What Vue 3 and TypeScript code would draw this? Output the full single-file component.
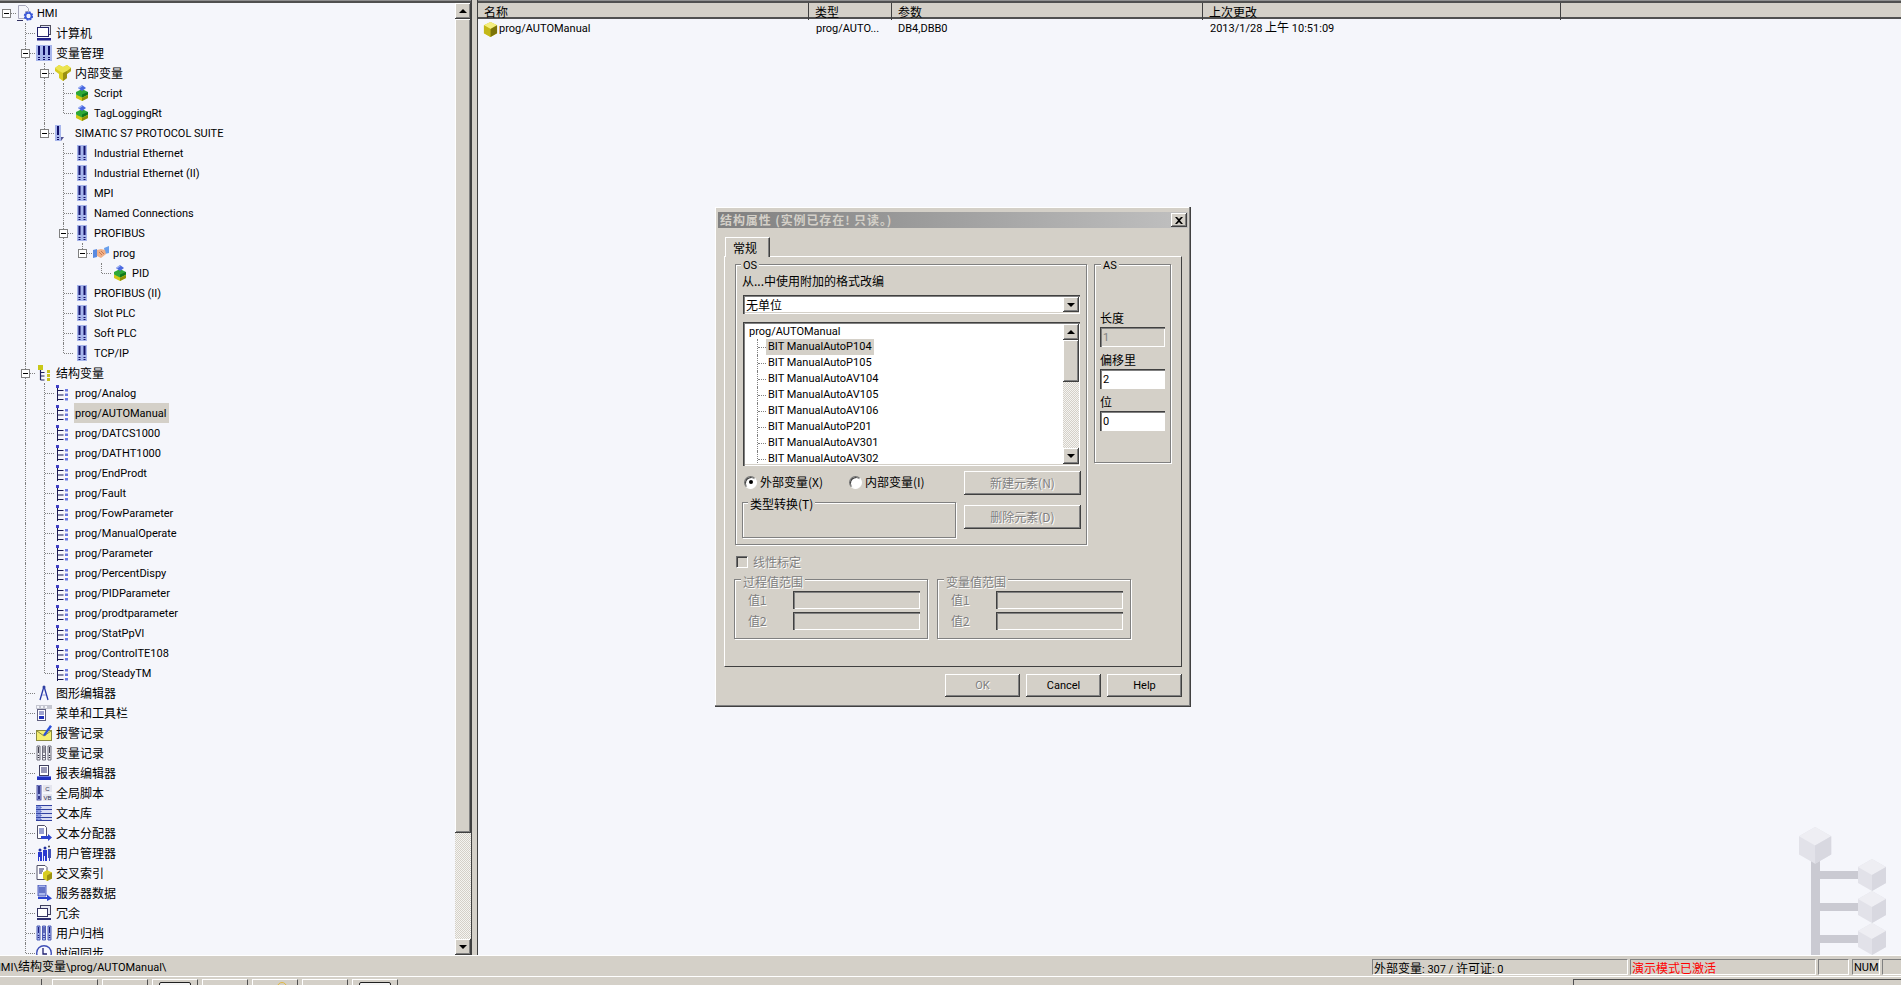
<script setup lang="ts">
type TreeNode = { label: string; icon: string; cjk?: boolean; children?: TreeNode[]; selected?: boolean }
type Row = TreeNode & { level: number; guides: boolean[]; hasNext: boolean; isRoot: boolean }

const leaf = (label: string, icon: string, cjk = false): TreeNode => ({ label, icon, cjk })
const channels = (names: string[]) => names.map((name) => leaf(name, 'channel'))

const structs = [
  'prog/Analog', 'prog/AUTOManual', 'prog/DATCS1000', 'prog/DATHT1000', 'prog/EndProdt', 'prog/Fault',
  'prog/FowParameter', 'prog/ManualOperate', 'prog/Parameter', 'prog/PercentDispy', 'prog/PIDParameter',
  'prog/prodtparameter', 'prog/StatPpVl', 'prog/ControlTE108', 'prog/SteadyTM',
].map((name) => ({ ...leaf(name, 'struct'), selected: name === 'prog/AUTOManual' }))

const tree: TreeNode = {
  label: 'HMI',
  icon: 'hmi',
  children: [
    leaf('计算机', 'pc', true),
    {
      label: '变量管理',
      icon: 'tags',
      cjk: true,
      children: [
        { label: '内部变量', icon: 'cubes', cjk: true, children: [leaf('Script', 'stack'), leaf('TagLoggingRt', 'stack')] },
        {
          label: 'SIMATIC S7 PROTOCOL SUITE',
          icon: 'driver',
          children: [
            ...channels(['Industrial Ethernet', 'Industrial Ethernet (II)', 'MPI', 'Named Connections']),
            {
              label: 'PROFIBUS',
              icon: 'channel',
              children: [{ label: 'prog', icon: 'hands', children: [leaf('PID', 'stack')] }],
            },
            ...channels(['PROFIBUS (II)', 'Slot PLC', 'Soft PLC', 'TCP/IP']),
          ],
        },
      ],
    },
    { label: '结构变量', icon: 'structroot', cjk: true, children: structs },
    leaf('图形编辑器', 'draw', true),
    leaf('菜单和工具栏', 'menu', true),
    leaf('报警记录', 'alarm', true),
    leaf('变量记录', 'log', true),
    leaf('报表编辑器', 'report', true),
    leaf('全局脚本', 'script', true),
    leaf('文本库', 'textlib', true),
    leaf('文本分配器', 'textdist', true),
    leaf('用户管理器', 'user', true),
    leaf('交叉索引', 'crossref', true),
    leaf('服务器数据', 'server', true),
    leaf('冗余', 'redundancy', true),
    leaf('用户归档', 'archive', true),
    leaf('时间同步', 'time', true),
  ],
}

function flatten(node: TreeNode, level: number, guides: boolean[], hasNext: boolean, isRoot: boolean): Row[] {
  const rows: Row[] = [{ ...node, level, guides, hasNext, isRoot }]
  const kids = node.children ?? []
  kids.forEach((kid, index) => {
    const childGuides = isRoot ? [false] : [...guides, hasNext]
    rows.push(...flatten(kid, level + 1, childGuides, index < kids.length - 1, false))
  })
  return rows
}

const rows = flatten(tree, 0, [], false, true)

const members = ['P104', 'P105', 'AV104', 'AV105', 'AV106', 'P201', 'AV301', 'AV302', 'AV303'].map((n) => `BIT ManualAuto${n}`)
const taskCells = [0, 1, 2, 3, 4, 5, 6]
const markCubes = [
  { x: 0, y: 0, s: 1.15 },
  { x: 59, y: 32, s: 1 },
  { x: 59, y: 64, s: 1 },
  { x: 59, y: 96, s: 1 },
]
</script>

<template>
  <div class="page">
    <svg class="defs" aria-hidden="true">
      <symbol id="i-hmi" viewBox="0 0 16 16">
        <path d="M1.500 .5h7l3 3v3h-3v7h-7z" fill="#f4f5fb" stroke="#a8a8bc" />
        <path d="M0 15.500h6" stroke="#303060" />
        <circle cx="11.500" cy="11" r="3.600" fill="none" stroke="#3a58d8" stroke-width="2.200" stroke-dasharray="1.800 1" />
        <circle cx="11.500" cy="11" r="3" fill="none" stroke="#3a58d8" stroke-width="1.600" />
        <circle cx="11.500" cy="11" r="1" fill="#e8ecff" />
      </symbol>
      <symbol id="i-pc" viewBox="0 0 16 16">
        <rect x="4.500" y=".5" width="10" height="9" fill="#dfe2f2" stroke="#505060" />
        <rect x="1.500" y="2.500" width="11" height="9" fill="#fff" stroke="#20206a" />
        <rect x="1" y="13" width="14" height="2.500" fill="#20208a" />
      </symbol>
      <symbol id="i-tags" viewBox="0 0 16 16">
        <rect x="0" y="0" width="16" height="16" fill="#a8b6ec" />
        <path d="M3 1v9M8 1v9M13 1v9" stroke="#10106a" stroke-width="2" />
        <path d="M3 12v3M8 12v3M13 12v3" stroke="#10106a" stroke-width="2" stroke-dasharray="1 1" />
      </symbol>
      <symbol id="i-cubes" viewBox="0 0 16 16">
        <path d="M0 3l4-3 4 2 4-2 4 3v3l-4 3v4l-4 3-4-3V9L0 6z" fill="#d8cc20" />
        <path d="M0 3l4-3 4 2 4-2 4 3-4 3-4 2-4-2z" fill="#ece450" />
        <path d="M8 8v8l4-3V6z" fill="#9a9010" />
        <path d="M12 6l4-3v3l-4 3z" fill="#aea418" />
      </symbol>
      <symbol id="i-stack" viewBox="0 0 16 16">
        <path d="M2 10l6-3 6 3v3l-6 3-6-3z" fill="#cfc818" />
        <path d="M8 13v3l6-3v-3z" fill="#8e9008" />
        <path d="M2 7l6-3 6 3v2.500l-6 3-6-3z" fill="#2ea838" />
        <path d="M8 9.500v3l6-3V7z" fill="#10781c" />
        <path d="M4 3l4-3 4 3-4 3z" fill="#4a68e0" />
        <path d="M4 3l4-3 1 .8-4 3z" fill="#a0b4f4" />
      </symbol>
      <symbol id="i-driver" viewBox="0 0 16 16">
        <rect x="0" y="0" width="6" height="16" fill="#a8b6ec" />
        <path d="M3 1v9" stroke="#10106a" stroke-width="2" />
        <path d="M3 12v3" stroke="#10106a" stroke-width="2" stroke-dasharray="1 1" />
        <path d="M6 12h3l-3 4z" fill="#505090" />
      </symbol>
      <symbol id="i-channel" viewBox="0 0 16 16">
        <rect x="3" y="0" width="10" height="16" fill="#a8b6ec" />
        <path d="M5.500 1v9M10.500 1v9" stroke="#10106a" stroke-width="2" />
        <path d="M5.500 12v3M10.500 12v3" stroke="#10106a" stroke-width="2" stroke-dasharray="1 1" />
      </symbol>
      <symbol id="i-hands" viewBox="0 0 16 16">
        <path d="M0 5l4-1v8l-4 1z" fill="#5a8ae0" />
        <path d="M11 3l5-2v7l-4 1z" fill="#6aa0ec" />
        <path d="M4 5l4-1 4 1 1 4-5 4-4-2z" fill="#f0b088" />
        <path d="M6 7l3 3M8 6l3 3" stroke="#c87850" />
      </symbol>
      <symbol id="i-structroot" viewBox="0 0 16 16">
        <rect x="2" y="0" width="5" height="5" fill="#c8c818" />
        <path d="M4.500 5v10M4.500 7.500h4M4.500 11h4M4.500 15h4" stroke="#202060" stroke-width="1.200" />
        <path d="M11 5h3v3h-3zM11 9h3v3h-3zM11 13h3v3h-3z" fill="#c8c020" />
      </symbol>
      <symbol id="i-struct" viewBox="0 0 16 16">
        <rect x="1" y="0" width="3" height="3" fill="#4040c8" />
        <path d="M2.500 3v13M2.500 5.500h6M2.500 10h6M2.500 14.500h6" stroke="#181850" />
        <path d="M10 4h3v2.500h-3zM10 8.500h3V11h-3zM10 13h3v2.500h-3z" fill="#6a78e0" />
      </symbol>
      <symbol id="i-draw" viewBox="0 0 16 16">
        <circle cx="8" cy="2" r="1.500" fill="#3040a0" />
        <path d="M7.500 3L4 15M8.500 3L12 15" stroke="#2838a8" stroke-width="1.300" fill="none" />
        <path d="M6 10h4" stroke="#9098d8" />
      </symbol>
      <symbol id="i-menu" viewBox="0 0 16 16">
        <rect x="0" y="0" width="16" height="4" fill="#c4c6d0" />
        <path d="M1 1h2v2H1zM5 1h2v2H5zM9 1h2v2H9z" fill="#f4f5fb" />
        <rect x="1.500" y="4.500" width="8" height="11" fill="#fff" stroke="#606080" />
        <path d="M3 7h5M3 9h5" stroke="#4048a0" />
        <rect x="3" y="11" width="5" height="3" fill="#2030b8" />
      </symbol>
      <symbol id="i-alarm" viewBox="0 0 16 16">
        <rect x=".5" y="5.500" width="15" height="10" fill="#f4ee70" stroke="#8a8a40" />
        <path d="M1 6l7 5 7-5" stroke="#8a8a40" fill="none" />
        <path d="M7 10l7-10 2 1.500L9 11z" fill="#2c50d8" />
      </symbol>
      <symbol id="i-log" viewBox="0 0 16 16">
        <path d="M1 1h3v14H1zM6.500 1h3v14h-3zM12 1h3v14h-3z" fill="#f0f0f4" stroke="#606070" stroke-width=".9" />
        <path d="M2.500 2v6M8 2v6M13.500 2v6" stroke="#404050" />
        <path d="M2.500 10v4M8 10v4M13.500 10v4" stroke="#303040" stroke-width="1.500" stroke-dasharray="1 1" />
      </symbol>
      <symbol id="i-report" viewBox="0 0 16 16">
        <rect x="3.500" y=".5" width="9" height="10" fill="#fff" stroke="#404060" />
        <path d="M5 3h6M5 5h6M5 7h6" stroke="#303070" />
        <path d="M1 11h14v4H1z" fill="#2030c0" />
        <path d="M1 11h14v1H1z" fill="#7080e8" />
      </symbol>
      <symbol id="i-script" viewBox="0 0 16 16">
        <rect x="1" y="0" width="4" height="15" fill="#a8b6ec" stroke="#303090" stroke-width=".8" />
        <path d="M3 1v8" stroke="#10106a" stroke-width="1.500" />
        <path d="M3 11v3" stroke="#10106a" stroke-width="1.500" />
        <rect x="7" y="0" width="9" height="7" fill="#e4e5ee" />
        <rect x="7" y="9" width="9" height="7" fill="#e4e5ee" />
        <text x="11.500" y="6" font-size="6" font-family="Liberation Sans" text-anchor="middle" fill="#303050">C</text>
        <text x="11.500" y="15" font-size="6" font-family="Liberation Sans" text-anchor="middle" fill="#303050">VB</text>
      </symbol>
      <symbol id="i-textlib" viewBox="0 0 16 16">
        <rect x="0" y="0" width="16" height="16" fill="#d8dcf4" />
        <rect x="0" y="0" width="5" height="16" fill="#8898e0" />
        <path d="M0 .5h16M0 4.500h16M0 8.500h16M0 12.500h16M0 15.500h16" stroke="#3040a0" />
        <path d="M1 0v16M5 0v16" stroke="#4050b0" stroke-dasharray="1 1" />
      </symbol>
      <symbol id="i-textdist" viewBox="0 0 16 16">
        <path d="M1.500 .5h7l2 2v11h-9z" fill="#fff" stroke="#505068" />
        <path d="M3 4h5M3 6h5M3 8h5" stroke="#3040a0" />
        <path d="M5 11h7V9l4 3.500-4 3.500v-2H5z" fill="#2c44d0" />
      </symbol>
      <symbol id="i-user" viewBox="0 0 16 16">
        <circle cx="4" cy="5" r="1.500" fill="#2030a0" />
        <circle cx="9" cy="3" r="1.500" fill="#2030a0" />
        <circle cx="13" cy="1.500" r="1" fill="#404040" />
        <path d="M2 7h4v9H4v-4H3v4H2zM7 5h4v11H9v-5H8v5H7z" fill="#2838d0" />
        <path d="M12 4h3v9h-1v3h-1v-3h-1z" fill="#4050b8" />
      </symbol>
      <symbol id="i-crossref" viewBox="0 0 16 16">
        <path d="M1 .5h8l2 2v12H1z" fill="#fff" stroke="#505068" />
        <path d="M3 4h5M3 6h4M3 8h3" stroke="#202060" />
        <path d="M11 5l5 2.500v6L11 16l-4-2.500v-6z" fill="#d8cc20" />
        <path d="M11 10.500V16l5-2.500v-6z" fill="#9c9210" />
      </symbol>
      <symbol id="i-server" viewBox="0 0 16 16">
        <path d="M2 0h8v11H2z" fill="#a8b6ec" stroke="#3040b0" stroke-width=".8" />
        <path d="M3 3h6M3 5h6M3 7h6" stroke="#2030a0" />
        <path d="M2 12h9V9.500l5 4-5 2.500v-2H2z" fill="#2c44d0" />
      </symbol>
      <symbol id="i-redundancy" viewBox="0 0 16 16">
        <rect x="4.500" y=".5" width="10" height="9" fill="#e8e9f4" stroke="#404060" />
        <rect x="1.500" y="3.500" width="10" height="8" fill="#fff" stroke="#303060" />
        <rect x="1" y="13" width="14" height="2" fill="#303070" />
      </symbol>
      <symbol id="i-archive" viewBox="0 0 16 16">
        <path d="M1 1h3v14H1zM6.500 1h3v14h-3zM12 1h3v14h-3z" fill="#a8b6ec" stroke="#4050b0" stroke-width=".9" />
        <path d="M2.500 2v6M8 2v6M13.500 2v6" stroke="#202080" />
        <path d="M2.500 10v4M8 10v4M13.500 10v4" stroke="#202080" stroke-width="1.500" stroke-dasharray="1 1" />
      </symbol>
      <symbol id="i-time" viewBox="0 0 16 16">
        <circle cx="8" cy="8" r="7.300" fill="#f8f8ff" stroke="#4050b8" stroke-width="1.400" />
        <path d="M7 3v6h4" stroke="#202070" stroke-width="1.300" fill="none" />
      </symbol>
      <symbol id="i-cube" viewBox="0 0 16 16">
        <path d="M8 0l7 3.500v8.500l-7 4-7-4V3.500z" fill="#d8cc20" />
        <path d="M8 0l7 3.500-7 4-7-4z" fill="#f4ee80" />
        <path d="M8 7.500V16l-7-4V3.500z" fill="#c4b818" />
        <path d="M8 7.500V16l7-4V3.500z" fill="#7c7408" />
      </symbol>
    </svg>

    <div class="top-edge"></div>

    <div class="work">
      <div class="tree">
        <div v-for="(row, i) in rows" :key="i" class="tree-row">
          <span v-for="(on, g) in row.guides" :key="g" class="indent" :class="{ guide: on }"></span>
          <span class="own" :class="{ root: row.isRoot, next: row.hasNext }">
            <span v-if="row.children" class="box"></span>
          </span>
          <svg class="ico"><use :href="`#i-${row.icon}`" /></svg>
          <span class="label" :class="{ cjk: row.cjk, selected: row.selected }">{{ row.label }}</span>
        </div>
      </div>

      <div class="vscroll tree-scroll">
        <div class="sbtn raised"><i class="tri up"></i></div>
        <div class="thumb raised main-thumb"></div>
        <div class="track"></div>
        <div class="sbtn raised"><i class="tri down"></i></div>
      </div>

      <div class="split"></div>

      <div class="list">
        <div class="list-head">
          <div class="col c-name cjk">名称</div>
          <div class="col c-type cjk">类型</div>
          <div class="col c-arg cjk">参数</div>
          <div class="col c-date cjk">上次更改</div>
          <div class="col c-rest"></div>
        </div>
        <div class="list-row">
          <div class="cell c-name first"><svg class="ico small"><use href="#i-cube" /></svg>prog/AUTOManual</div>
          <div class="cell c-type">prog/AUTO...</div>
          <div class="cell c-arg">DB4,DBB0</div>
          <div class="cell c-date">2013/1/28 <span class="cjk">上午</span> 10:51:09</div>
        </div>
      </div>
    </div>

    <div class="status">
      <div class="path">HMI\<span class="cjk">结构变量</span>\prog/AUTOManual\</div>
      <div class="pane p-count"><span class="cjk">外部变量</span>: 307 / <span class="cjk">许可证</span>: 0</div>
      <div class="pane p-demo cjk">演示模式已激活</div>
      <div class="pane p-empty"></div>
      <div class="pane p-num">NUM</div>
      <div class="pane p-last"></div>
    </div>

    <div class="taskbar">
      <div class="task-first"></div>
      <div v-for="n in taskCells" :key="n" class="task-cell" :class="`t${n}`"></div>
      <div class="task-box"></div>
    </div>

    <!-- watermark, sits on the empty list area -->
    <svg class="mark" width="90" height="130" viewBox="0 0 90 130">
      <path d="M12 30h9v98h-9zM21 44h38v8H21zM21 76h38v8H21zM21 108h38v8H21z" fill="#cacad2" />
      <g v-for="c in markCubes" :key="c.y" :transform="`translate(${c.x} ${c.y}) scale(${c.s})`">
        <path d="M14 0l14 8v16l-14 8-14-8V8z" fill="#e2e2e9" />
        <path d="M14 0l14 8-14 8L0 8z" fill="#eeeef3" />
        <path d="M14 16v16l14-8V8z" fill="#d8d8e0" />
      </g>
    </svg>

    <div class="dialog">
      <div class="titlebar">
        <span class="title cjk">结构属性 (实例已存在! 只读。)</span>
        <div class="close raised">
          <svg width="8" height="7" viewBox="0 0 8 7"><path d="M0 0l2 0 2 2 2-2h2L5 3.500 8 7H6L4 5 2 7H0l3-3.500z" fill="#000" /></svg>
        </div>
      </div>

      <div class="tabs">
        <div class="tab cjk">常规</div>
      </div>

      <div class="panel">
        <div class="top-groups">
          <section class="group os">
            <div class="legend os-legend">OS</div>
            <div class="cjk hint">从...中使用附加的格式改编</div>
            <div class="combo sunken">
              <span class="cjk combo-text">无单位</span>
              <div class="sbtn raised"><i class="tri down"></i></div>
            </div>
            <div class="members sunken">
              <div class="member-rows">
                <div class="member-root">prog/AUTOManual</div>
                <div v-for="(m, i) in members" :key="m" class="member">
                  <span class="member-line"></span>
                  <span class="member-text" :class="{ selected: i === 0 }">{{ m }}</span>
                </div>
              </div>
              <div class="vscroll">
                <div class="sbtn raised"><i class="tri up"></i></div>
                <div class="thumb raised small-thumb"></div>
                <div class="track"></div>
                <div class="sbtn raised"><i class="tri down"></i></div>
              </div>
            </div>
            <div class="os-bottom">
              <div class="os-left">
                <div class="radios">
                  <label class="radio r1"><i class="dot on"></i><span class="cjk">外部变量(X)</span></label>
                  <label class="radio"><i class="dot"></i><span class="cjk">内部变量(I)</span></label>
                </div>
                <section class="group convert">
                  <div class="legend convert-legend cjk">类型转换(T)</div>
                </section>
              </div>
              <div class="os-right">
                <button class="btn raised cjk wide" disabled>新建元素(N)</button>
                <button class="btn raised cjk wide" disabled>删除元素(D)</button>
              </div>
            </div>
          </section>

          <section class="group as">
            <div class="legend">AS</div>
            <div class="cjk as-label first">长度</div>
            <input class="edit off" value="1" readonly />
            <div class="cjk as-label">偏移里</div>
            <input class="edit" value="2" readonly />
            <div class="cjk as-label">位</div>
            <input class="edit" value="0" readonly />
          </section>
        </div>

        <div class="check-row">
          <i class="check"></i>
          <span class="cjk muted">线性标定</span>
        </div>

        <div class="range-groups">
          <section v-for="name in ['过程值范围', '变量值范围']" :key="name" class="group range">
            <div class="legend range-legend cjk muted">{{ name }}</div>
            <div class="range-grid">
              <span class="cjk muted">值1</span><input class="edit off" readonly />
              <span class="cjk muted">值2</span><input class="edit off" readonly />
            </div>
          </section>
        </div>
      </div>

      <div class="footer">
        <button class="btn raised" disabled>OK</button>
        <button class="btn raised">Cancel</button>
        <button class="btn raised">Help</button>
      </div>
    </div>
  </div>
</template>

<style>
html,
body {
  margin: 0;
  overflow: hidden;
  background: #f5f6fb;
}
</style>

<style scoped>
.page {
  position: relative;
  width: 1901px;
  height: 985px;
  display: flex;
  flex-direction: column;
  overflow: hidden;
  background: #f5f6fb;
  color: #000;
  font: 11px/14px Roboto, "Liberation Sans", sans-serif;
}
.defs {
  display: none;
}
.cjk {
  font-family: "Noto Sans CJK SC", "Liberation Sans", sans-serif;
  font-size: 12px;
}
.raised {
  background: #d4d0c8;
  box-shadow: inset -1px -1px #404040, inset 1px 1px #fff, inset -2px -2px #808080;
}
.sunken {
  background: #fff;
  box-shadow: inset 1px 1px #404040, inset 2px 2px #808080, inset -1px -1px #fff, inset -2px -2px #d4d0c8;
}
.top-edge {
  height: 3px;
  box-sizing: border-box;
  border-top: 1px solid #909090;
  border-bottom: 2px solid #505050;
  background: #d4d0c8;
  flex: none;
}
.work {
  flex: 1;
  min-height: 0;
  display: flex;
}

/* tree */
.tree {
  width: 455px;
  overflow: hidden;
  flex: none;
}
.tree-row {
  display: flex;
  align-items: center;
  height: 20px;
  margin-left: -3px;
}
.indent,
.own {
  position: relative;
  flex: none;
  width: 19px;
  height: 20px;
  display: flex;
  align-items: center;
  justify-content: center;
}
.indent.guide::before,
.own::before {
  content: "";
  position: absolute;
  left: 9px;
  top: 0;
  bottom: 0;
  border-left: 1px dotted #808080;
}
.own:not(.next)::before {
  bottom: 10px;
}
.own::after {
  content: "";
  position: absolute;
  left: 10px;
  right: 0;
  top: 10px;
  border-top: 1px dotted #808080;
}
.own.root::before {
  display: none;
}
.box {
  position: relative;
  z-index: 1;
  width: 9px;
  height: 9px;
  box-sizing: border-box;
  border: 1px solid #808080;
  background: linear-gradient(#000, #000) center / 5px 1px no-repeat #fff;
}
.ico {
  flex: none;
  width: 16px;
  height: 16px;
  margin-left: 1px;
}
.label {
  margin-left: 3px;
  padding: 0 3px 0 1px;
  line-height: 22px;
  height: 20px;
  white-space: nowrap;
}
.label.cjk {
  line-height: 20px;
}
.selected {
  background: #d4d0c8;
}

/* scrollbars */
.vscroll {
  width: 16px;
  flex: none;
  display: flex;
  flex-direction: column;
}
.sbtn {
  width: 16px;
  height: 16px;
  flex: none;
  display: flex;
  align-items: center;
  justify-content: center;
}
.tri {
  width: 0;
  height: 0;
  border-left: 4px solid transparent;
  border-right: 4px solid transparent;
}
.tri.up {
  border-bottom: 4px solid #000;
}
.tri.down {
  border-top: 4px solid #000;
}
.thumb {
  flex: none;
}
.main-thumb {
  height: 814px;
}
.small-thumb {
  height: 42px;
}
.track {
  flex: 1;
  min-height: 0;
  background: conic-gradient(#f5f4f1 25%, #d4d0c8 0 50%, #f5f4f1 0 75%, #d4d0c8 0) 0 0 / 2px 2px;
}
.split {
  width: 7px;
  flex: none;
  box-sizing: border-box;
  margin-top: -3px;
  background: #d4d0c8;
  border-left: 1px solid #404040;
  border-right: 1px solid #404040;
}

/* right list */
.list {
  flex: 1;
  min-width: 0;
}
.list-head {
  display: flex;
  height: 16px;
  box-sizing: border-box;
  background: #d4d0c8;
  border-bottom: 2px solid #505050;
}
.col {
  box-sizing: border-box;
  padding-left: 6px;
  border-right: 1px solid #404040;
  line-height: 17px;
  height: 17px;
  overflow: hidden;
}
.c-name { width: 331px; }
.c-type { width: 83px; }
.c-arg { width: 311px; }
.c-date { width: 358px; }
.c-rest { flex: 1; border-right: 0; }
.list-row {
  display: flex;
  height: 18px;
  margin-top: 1px;
}
.cell {
  box-sizing: border-box;
  padding-left: 7px;
  line-height: 18px;
  white-space: nowrap;
}
.cell .cjk {
  line-height: 1;
}
.cell.first {
  display: flex;
  align-items: center;
  padding-left: 5px;
}
.cell.c-arg {
  padding-left: 6px;
}
.ico.small {
  width: 15px;
  height: 15px;
  margin: 0 1px 0 0;
}

/* status */
.status {
  flex: none;
  height: 21px;
  box-sizing: border-box;
  border-top: 1px solid #fff;
  background: #d4d0c8;
  display: flex;
  align-items: center;
  padding-top: 1px;
  position: relative;
  z-index: 1;
}
.path {
  flex: 1;
  margin-left: -7px;
  white-space: nowrap;
}
.pane {
  height: 16px;
  line-height: 15px;
  box-sizing: border-box;
  padding-left: 1px;
  border: 1px solid;
  border-color: #808080 #fff #fff #808080;
  flex: none;
  white-space: nowrap;
  margin-left: 2px;
}
.p-count { width: 256px; }
.p-demo { width: 186px; color: #f00; }
.p-empty { width: 31px; margin-right: 1px; }
.p-num { width: 28px; }
.p-last { width: 21px; margin-right: -2px; }
.taskbar {
  flex: none;
  height: 9px;
  box-sizing: border-box;
  border-top: 1px solid #fff;
  background: #d4d0c8;
  display: flex;
  padding-top: 2px;
}
.task-first {
  width: 42px;
  margin-right: 10px;
  box-sizing: border-box;
  border-right: 1px solid #505050;
}
.task-cell {
  position: relative;
  flex: none;
  width: 46px;
  margin-right: 4px;
  box-sizing: border-box;
  border-left: 1px solid #fff;
  border-top: 1px solid #fff;
  border-right: 1px solid #505050;
}
.task-cell.t2::after,
.task-cell.t6::after {
  content: "";
  position: absolute;
  left: 6px;
  top: 2px;
  width: 32px;
  height: 6px;
  box-sizing: border-box;
  border: 1px solid #202020;
  border-radius: 2px 2px 0 0;
  background: #f4f4f4;
}
.task-cell.t4::after {
  content: "";
  position: absolute;
  left: 24px;
  top: 2px;
  width: 10px;
  height: 6px;
  border: 1px solid #e0b840;
  box-sizing: border-box;
  border-radius: 5px 5px 0 0;
}
.task-box {
  margin-left: auto;
  width: 328px;
  box-sizing: border-box;
  border-left: 1px solid #505050;
  border-top: 1px solid #505050;
}
.mark {
  position: absolute;
  left: 1799px;
  top: 827px;
}

/* dialog */
.dialog {
  position: absolute;
  left: 715px;
  top: 207px;
  width: 476px;
  height: 500px;
  box-sizing: border-box;
  padding: 5px 3px 0;
  background: #d4d0c8;
  box-shadow: inset -1px -1px #404040, inset -2px -2px #808080, inset 1px 1px #fff;
}
.titlebar {
  height: 16px;
  display: flex;
  align-items: center;
  justify-content: space-between;
  padding: 0 1px 0 2px;
  background: linear-gradient(90deg, #808080, #c0c0c0);
}
.title {
  color: #d4d0c8;
  font-weight: 700;
  letter-spacing: 0.9px;
  white-space: nowrap;
}
.close {
  width: 16px;
  height: 14px;
  display: flex;
  align-items: center;
  justify-content: center;
}
.tabs {
  display: flex;
  margin: 9px 6px 0;
  padding-left: 1px;
}
.tab {
  width: 45px;
  height: 20px;
  box-sizing: border-box;
  padding-left: 7px;
  line-height: 19px;
  background: #d4d0c8;
  border-top: 1px solid #fff;
  border-left: 1px solid #fff;
  border-right: 1px solid #404040;
  box-shadow: inset -1px 0 #808080;
  position: relative;
  z-index: 1;
  margin-bottom: -1px;
}
.panel {
  margin: 0 6px;
  height: 411px;
  box-sizing: border-box;
  padding: 7px 0 0 10px;
  border: 1px solid;
  border-color: #fff #404040 #404040 #fff;
}
.top-groups {
  display: flex;
  align-items: flex-start;
  gap: 7px;
}
.group {
  box-sizing: border-box;
  border: 1px solid #808080;
  box-shadow: 1px 1px #fff, inset 1px 1px #fff;
}
.legend {
  width: fit-content;
  margin: -6px 0 0 1px;
  padding: 0 2px;
  height: 14px;
  background: #d4d0c8;
  white-space: nowrap;
}
.os-legend {
  margin-left: -1px;
}
.convert-legend {
  margin-left: 5px;
}
.range-legend {
  margin: -5px 0 0 -7px;
}
.os {
  width: 352px;
  height: 281px;
  padding: 0 6px;
}
.hint {
  margin-top: 1px;
  height: 14px;
  line-height: 14px;
  white-space: nowrap;
}
.combo {
  margin: 7px 0 0 1px;
  height: 19px;
  display: flex;
  align-items: center;
  justify-content: space-between;
  padding: 0 1px 0 3px;
}
.combo .sbtn {
  height: 15px;
}
.members {
  margin: 8px 0 0 1px;
  height: 144px;
  box-sizing: border-box;
  padding: 2px 1px 2px 2px;
  display: flex;
  overflow: hidden;
}
.member-rows {
  flex: 1;
  min-width: 0;
  overflow: hidden;
}
.member-root {
  height: 15px;
  line-height: 15px;
  padding-left: 4px;
}
.member {
  display: flex;
  height: 16px;
}
.member-line {
  position: relative;
  width: 21px;
  flex: none;
}
.member-line::before {
  content: "";
  position: absolute;
  left: 12px;
  top: 0;
  bottom: 0;
  border-left: 1px dotted #808080;
}
.member-line::after {
  content: "";
  position: absolute;
  left: 13px;
  right: 0;
  top: 8px;
  border-top: 1px dotted #808080;
}
.member-text {
  padding: 0 2px;
  line-height: 16px;
  white-space: nowrap;
}
.os-bottom {
  margin-top: 5px;
  display: flex;
  justify-content: space-between;
}
.os-left {
  width: 214px;
}
.radios {
  height: 22px;
  display: flex;
  align-items: center;
}
.radio {
  display: flex;
  align-items: center;
  gap: 3px;
}
.radio.r1 {
  width: 105px;
  margin-left: 2px;
}
.dot {
  width: 13px;
  height: 13px;
  box-sizing: border-box;
  border-radius: 50%;
  border: 1px solid;
  border-color: #707070 #fff #fff #707070;
  background: #fff;
  box-shadow: inset 1px 1px #404040;
  display: flex;
  align-items: center;
  justify-content: center;
}
.dot.on::after {
  content: "";
  width: 4px;
  height: 4px;
  border-radius: 50%;
  background: #000;
}
.convert {
  margin-top: 9px;
  height: 36px;
}
.os-right {
  display: flex;
  flex-direction: column;
  gap: 10px;
  margin-right: -1px;
}
.btn {
  width: 75px;
  height: 23px;
  border: 0;
  padding: 0;
  font: inherit;
  color: #000;
}
.btn.cjk {
  font-family: "Noto Sans CJK SC", sans-serif;
  font-size: 12px;
}
.btn.wide {
  width: 117px;
  height: 24px;
}
.btn:disabled,
.muted {
  color: #808080;
  text-shadow: 1px 1px 0 #fff;
}
.as {
  width: 77px;
  height: 199px;
  padding: 0 5px;
}
.as-label {
  height: 14px;
  line-height: 14px;
  margin: 6px 0 2px;
}
.as-label.first {
  margin-top: 38px;
}
.edit {
  display: block;
  width: 100%;
  height: 20px;
  box-sizing: border-box;
  border: 0;
  padding: 0 3px;
  outline: none;
  background: #fff;
  box-shadow: inset 1px 1px #404040, inset 2px 2px #808080, inset -1px -1px #fff;
  font: inherit;
  color: #000;
}
.edit.off {
  background: #d4d0c8;
  color: #808080;
}
.check-row {
  margin: 11px 0 0 1px;
  height: 12px;
  display: flex;
  align-items: center;
  gap: 5px;
}
.check {
  width: 12px;
  height: 12px;
  box-sizing: border-box;
  border: 1px solid;
  border-color: #707070 #fff #fff #707070;
  box-shadow: inset 1px 1px #404040;
}
.range-groups {
  margin: 11px 0 0 -1px;
  display: flex;
  gap: 9px;
}
.range {
  width: 194px;
  height: 60px;
  padding-left: 13px;
}
.range-grid {
  display: grid;
  grid-template-columns: 45px 127px;
  grid-auto-rows: 18px;
  row-gap: 3px;
  margin-top: 2px;
  align-items: center;
}
.range .edit {
  height: 18px;
}
.footer {
  display: flex;
  justify-content: flex-end;
  gap: 6px;
  margin: 7px 6px 0 0;
}
</style>
